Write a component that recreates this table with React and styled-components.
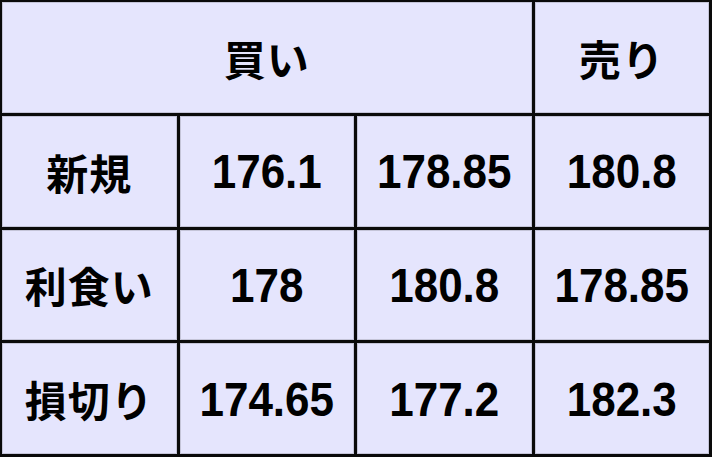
import styled, { createGlobalStyle } from 'styled-components'

const GlobalStyle = createGlobalStyle`
    html, body {
        margin: 0;
        padding: 0;
        background: #ffffff;
    }
`

const rows = [
    { label: "新規", values: ["176.1", "178.85", "180.8"] },
    { label: "利食い", values: ["178", "180.8", "178.85"] },
    { label: "損切り", values: ["174.65", "177.2", "182.3"] },
]

const App = () => {
    return (
        <>
            <GlobalStyle />
            <Table>
                <Cell $span={3}><Label>買い</Label></Cell>
                <Cell><Label>売り</Label></Cell>
                {rows.map((row) => (
                    <Row key={row.label}>
                        <Cell><Label>{row.label}</Label></Cell>
                        {row.values.map((value, i) => (
                            <Cell key={i}><Number>{value}</Number></Cell>
                        ))}
                    </Row>
                ))}
            </Table>
        </>
    )
}

const Table = styled.div`
    display: grid;
    grid-template-columns: repeat(4, 1fr);
    grid-template-rows: repeat(4, 1fr);
    gap: 3px;
    width: 712px;
    height: 457px;
    box-sizing: border-box;
    padding: 2px 3px 3px 2px;
    background-color: #0a0a0a;
`

const Row = styled.div`
    display: contents;
`

const Cell = styled.div`
    display: flex;
    align-items: center;
    justify-content: center;
    background-color: #e5e5fd;
    grid-column: span ${(props) => props.$span || 1};
    box-shadow: inset 0 0 0 1px #c4c4d8;
`

const Label = styled.span`
    font-family: "Noto Sans CJK JP", "Liberation Sans", sans-serif;
    font-weight: 700;
    font-size: 42px;
    color: #000000;
    letter-spacing: 1px;
`

const Number = styled.span`
    display: inline-block;
    font-family: "Liberation Sans", Arial, sans-serif;
    font-weight: 700;
    font-size: 44px;
    color: #000000;
    transform: scaleY(1.1);
`

export default App
